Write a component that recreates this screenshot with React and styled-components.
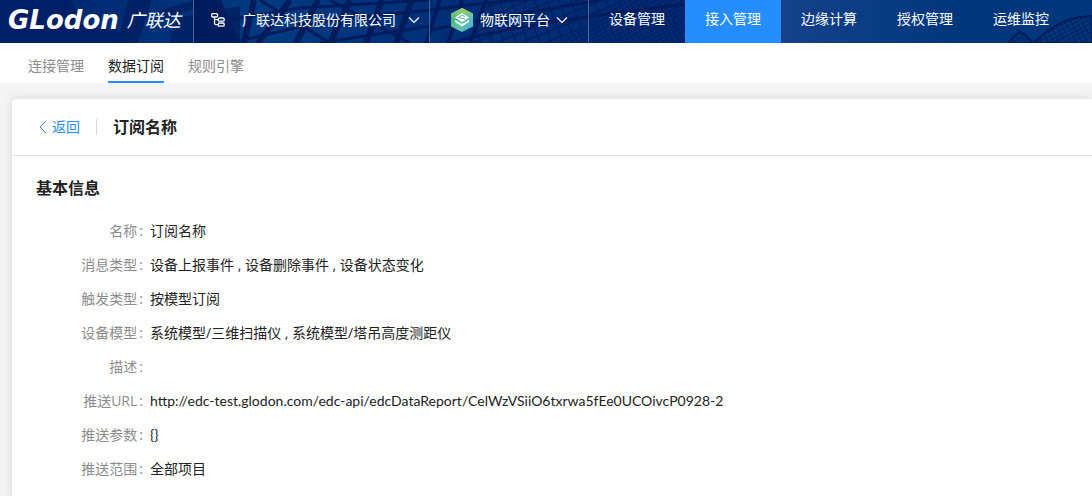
import React from 'react';
import styled, { createGlobalStyle } from 'styled-components';

const GlobalStyle = createGlobalStyle`
  * {
    box-sizing: border-box;
  }
  body {
    margin: 0;
    min-height: 100vh;
    background: #f4f4f4;
    color: #222;
    font-family: 'Open Sans', 'Noto Sans CJK SC', sans-serif;
    font-size: 14px;
    line-height: 22px;
    overflow-x: hidden;
  }
  a {
    color: inherit;
    text-decoration: none;
  }
`;

const Header = styled.header`
  position: relative;
  display: flex;
  height: 43px;
  background: #001f66;
  color: #fff;
  overflow: hidden;
`;

const Backdrop = styled.svg`
  position: absolute;
  top: 0;
  left: 0;
  width: 100%;
  height: 100%;
`;

const Brand = styled.a`
  position: relative;
  display: flex;
  flex: none;
  align-items: center;
  gap: 8px;
  width: 194px;
  padding: 0 8px 4px;
  border-right: 1px solid #4a6396;
  white-space: nowrap;
`;

const BrandLatin = styled.span`
  font: italic bold 26px/24px 'DejaVu Sans', sans-serif;
`;

const BrandHan = styled.span`
  font-size: 18px;
  font-style: italic;
  font-weight: 400;
  line-height: 24px;
`;

const Picker = styled.button`
  position: relative;
  display: flex;
  flex: none;
  align-items: center;
  width: ${({ $width }) => $width};
  padding: 0 8px 4px ${({ $inset }) => $inset};
  border: 0;
  border-right: 1px solid #4a6396;
  background: none;
  color: inherit;
  font: inherit;
  white-space: nowrap;
  cursor: pointer;
`;

const PickerText = styled.span`
  margin-left: ${({ $gap }) => $gap};
`;

const Chevron = styled.svg`
  width: 12px;
  height: 8px;
  margin-left: ${({ $gap }) => $gap};
`;

const MainNav = styled.nav`
  position: relative;
  display: flex;
`;

const MainLink = styled.a`
  width: 96px;
  padding: 8px 0 13px;
  background: ${({ $active }) => ($active ? '#268dff' : 'transparent')};
  text-align: center;
  white-space: nowrap;
`;

const SubNav = styled.nav`
  display: flex;
  gap: 24px;
  height: 40px;
  padding: 0 28px;
  background: #fff;
`;

const SubLink = styled.a`
  padding-top: 12px;
  border-bottom: 2px solid ${({ $active }) => ($active ? '#268dff' : 'transparent')};
  color: ${({ $active }) => ($active ? '#222' : '#8c8c8c')};
`;

const Card = styled.main`
  min-height: calc(100vh - 99px);
  margin: 16px 0 0 12px;
  border-radius: 4px 0 0 0;
  background: #fff;
  box-shadow: 0 0 10px rgba(0, 0, 0, 0.12);
`;

const CardHeader = styled.div`
  display: flex;
  align-items: center;
  height: 57px;
  padding: 0 24px;
  border-bottom: 1px solid #e4e4e4;
`;

const BackLink = styled.a`
  display: flex;
  align-items: center;
  gap: 4px;
  padding-right: 16px;
  color: #268dff;
`;

const Title = styled.h1`
  margin: 0;
  padding-left: 16px;
  font-size: 16px;
  font-weight: 700;
  line-height: 24px;
`;

const Divider = styled.span`
  width: 1px;
  height: 16px;
  background: #d9d9d9;
`;

const Section = styled.section`
  padding: 20px 24px;
`;

const SectionTitle = styled.h2`
  margin: 0 0 20px;
  font-size: 16px;
  font-weight: 700;
  line-height: 24px;
`;

const Details = styled.dl`
  display: grid;
  grid-template-columns: 107px 1fr;
  gap: 12px 7px;
  margin: 0;
`;

const Label = styled.dt`
  color: #8c8c8c;
  text-align: right;
  white-space: nowrap;

  &::after {
    content: ':';
    margin-left: 2px;
  }
`;

const Value = styled.dd`
  min-height: 22px;
  margin: 0;
  font-family: ${({ $code }) => ($code ? 'Lato, sans-serif' : 'inherit')};
`;

const mainLinks = ['设备管理', '接入管理', '边缘计算', '授权管理', '运维监控'];
const subLinks = ['连接管理', '数据订阅', '规则引擎'];

const details = [
  { label: '名称', value: '订阅名称' },
  { label: '消息类型', value: '设备上报事件 , 设备删除事件 , 设备状态变化' },
  { label: '触发类型', value: '按模型订阅' },
  { label: '设备模型', value: '系统模型/三维扫描仪 , 系统模型/塔吊高度测距仪' },
  { label: '描述', value: '' },
  {
    label: '推送URL',
    value: 'http://edc-test.glodon.com/edc-api/edcDataReport/CelWzVSiiO6txrwa5fEe0UCOivcP0928-2',
    code: true,
  },
  { label: '推送参数', value: '{}', code: true },
  { label: '推送范围', value: '全部项目' },
];

const HeaderBackdrop = () => (
  <Backdrop viewBox="0 0 1092 43" preserveAspectRatio="xMinYMid slice" aria-hidden="true">
    <defs>
      <linearGradient id="sky" x1="0" x2="1" y1="0" y2="0">
        <stop offset="0" stopColor="#00246c" />
        <stop offset="0.25" stopColor="#003a80" />
        <stop offset="0.4" stopColor="#002f78" />
        <stop offset="0.62" stopColor="#002a74" />
        <stop offset="0.72" stopColor="#14418a" />
        <stop offset="0.88" stopColor="#00377c" />
        <stop offset="1" stopColor="#00377c" />
      </linearGradient>
      <pattern id="mesh" width="11" height="9" patternUnits="userSpaceOnUse" patternTransform="rotate(-22)">
        <path d="M0 0H11M0 0V9" fill="none" stroke="#001c5c" strokeWidth="2.4" />
      </pattern>
      <pattern id="tightMesh" width="5" height="4" patternUnits="userSpaceOnUse" patternTransform="rotate(-28)">
        <path d="M0 0H5M0 0V4" fill="none" stroke="#001c5c" strokeWidth="1.5" />
      </pattern>
    </defs>
    <rect width="1092" height="43" fill="url(#sky)" />
    <path d="M0 0H70L84 28L118 30L128 43H0Z" fill="#001f66" />
    <path d="M128 0H152L138 43H118ZM160 10L196 0V8L164 20ZM176 18L240 6V43H170Z" fill="#001c5c" opacity="0.7" />
    <path d="M194 0H216L234 43H194Z" fill="#001c5c" />
    <g fill="none" stroke="#001c5c">
      <path d="M218 0L236 43M254 0L244 43M290 0L258 43M318 0L296 43M350 0L330 43M382 0L366 43M412 0L396 43" strokeWidth="6" />
      <path d="M216 22L300 8L430 0M230 43L330 20L430 10M320 43L430 26M260 0L330 43M330 0L410 43" strokeWidth="3" />
      <path d="M430 10C500 0 520 0 570 -4M430 30C500 16 560 8 600 0M450 43C520 24 580 18 685 4" strokeWidth="3" />
      <path d="M440 0L426 43M462 0L448 43M486 0L470 43" strokeWidth="4" />
    </g>
    <path d="M490 0H620L560 43H470Z" fill="url(#mesh)" />
    <path d="M620 0H685V43H560Z" fill="url(#tightMesh)" />
    <path d="M1008 43L1020 31L1034 43Z" fill="url(#tightMesh)" stroke="#001c5c" strokeWidth="2" />
    <path d="M1034 43C1052 24 1072 16 1092 16V43Z" fill="url(#tightMesh)" stroke="#001c5c" strokeWidth="2" />
  </Backdrop>
);

const Down = ({ gap }) => (
  <Chevron viewBox="0 0 12 8" $gap={gap} aria-hidden="true">
    <path d="M1 1.5L6 6.5L11 1.5" fill="none" stroke="currentColor" strokeWidth="1.2" />
  </Chevron>
);

const TreeIcon = () => (
  <svg width="14" height="14" viewBox="0 0 14 14" fill="none" stroke="currentColor" strokeWidth="1.3" aria-hidden="true">
    <rect x="0.6" y="0.6" width="6" height="3.4" rx="1.4" />
    <rect x="7.2" y="5" width="6" height="3.2" rx="1.2" />
    <rect x="7.2" y="10" width="6" height="3.2" rx="1.2" />
    <path d="M3.5 4V10.2Q3.5 11.6 5 11.6H7M3.5 6.6H7" />
  </svg>
);

const PlatformIcon = () => (
  <svg width="22" height="24" viewBox="0 0 22 24" aria-hidden="true">
    <defs>
      <linearGradient id="hex" x1="0" x2="1" y1="0.2" y2="0.8">
        <stop offset="0" stopColor="#35ae7c" />
        <stop offset="0.5" stopColor="#62c49b" />
        <stop offset="1" stopColor="#48b5dc" />
      </linearGradient>
      <linearGradient id="hexTop" x1="0" x2="0" y1="0" y2="1">
        <stop offset="0" stopColor="#9bd066" />
        <stop offset="0.5" stopColor="#9bd066" stopOpacity="0" />
      </linearGradient>
    </defs>
    <path d="M11 0L22 5.5V18.5L11 24L0 18.5V5.5Z" fill="url(#hex)" />
    <path d="M11 0L22 5.5V18.5L11 24L0 18.5V5.5Z" fill="url(#hexTop)" />
    <path d="M11 5L18 9.5L11 14L4 9.5Z" fill="#fff" />
    <path d="M14 8.5L11 7L7.5 9.5L14 11" fill="none" stroke="#58bd91" />
    <path d="M4 12L11 16L18 12V14L11 18.5L4 14Z" fill="#fff" />
  </svg>
);

const BackIcon = () => (
  <svg width="12" height="14" viewBox="0 0 12 14" fill="none" stroke="currentColor" aria-hidden="true">
    <path d="M10 1L4 7L10 13" />
  </svg>
);

const App = () => (
  <>
    <GlobalStyle />
    <Header>
      <HeaderBackdrop />
      <Brand href="#">
        <BrandLatin>GLodon</BrandLatin>
        <BrandHan>广联达</BrandHan>
      </Brand>
      <Picker type="button" $width="236px" $inset="17px">
        <TreeIcon />
        <PickerText $gap="17px">广联达科技股份有限公司</PickerText>
        <Down gap="12px" />
      </Picker>
      <Picker type="button" $width="159px" $inset="21px">
        <PlatformIcon />
        <PickerText $gap="7px">物联网平台</PickerText>
        <Down gap="6px" />
      </Picker>
      <MainNav>
        {mainLinks.map(text => (
          <MainLink key={text} href="#" $active={text === '接入管理'}>
            {text}
          </MainLink>
        ))}
      </MainNav>
    </Header>
    <SubNav>
      {subLinks.map(text => (
        <SubLink key={text} href="#" $active={text === '数据订阅'}>
          {text}
        </SubLink>
      ))}
    </SubNav>
    <Card>
      <CardHeader>
        <BackLink href="#">
          <BackIcon />
          返回
        </BackLink>
        <Divider />
        <Title>订阅名称</Title>
      </CardHeader>
      <Section>
        <SectionTitle>基本信息</SectionTitle>
        <Details>
          {details.map(({ label, value, code }) => (
            <React.Fragment key={label}>
              <Label>{label}</Label>
              <Value $code={code}>{value}</Value>
            </React.Fragment>
          ))}
        </Details>
      </Section>
    </Card>
  </>
);

export default App;
